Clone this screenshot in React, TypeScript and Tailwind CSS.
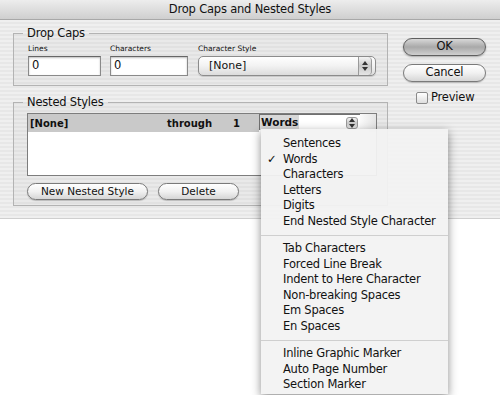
import React from "react";

const Stepper = ({ className = "" }: { className?: string }) => (
  <div className={"flex flex-col items-center justify-center gap-[2px] bg-gradient-to-b from-[#f4f4f4] via-[#c9c9c9] to-[#e6e6e6] border-l border-[#9a9a9a] " + className}>
    <svg width="6" height="4" viewBox="0 0 6 4"><path d="M3 0 L6 4 L0 4 Z" fill="#333" /></svg>
    <svg width="6" height="4" viewBox="0 0 6 4"><path d="M0 0 L6 0 L3 4 Z" fill="#333" /></svg>
  </div>
);

const MenuItem = ({ label, checked = false }: { label: string; checked?: boolean }) => (
  <div className="h-[15.6px] flex items-center text-[11.5px] tracking-[-0.25px] leading-none text-[#111]">
    <span className="w-[22px] pl-[6px]">{checked ? "✓" : ""}</span>
    <span>{label}</span>
  </div>
);

const Sep = () => (
  <div className="h-[11.4px] flex items-center">
    <div className="h-px w-full bg-[#cfcfcf]" />
  </div>
);

export default function App() {
  return (
    <div className="relative w-[500px] h-[395px] bg-white overflow-hidden font-['DejaVu_Sans',sans-serif] text-[#111]">
      {/* Title bar */}
      <div className="h-[20px] flex items-center justify-center bg-gradient-to-b from-[#ededed] to-[#cfcfcf] border-b border-[#a8a8a8] text-[11.5px] tracking-[-0.2px] leading-none">
        Drop Caps and Nested Styles
      </div>

      {/* Dialog body */}
      <div className="h-[199px] flex pl-[13px] pt-[5px] bg-[repeating-linear-gradient(180deg,#efefef_0px,#efefef_2px,#e7e7e7_2px,#e7e7e7_4px)] border-b border-[#cfcfcf]">
        <div className="w-[375px] flex flex-col gap-[8px]">
          {/* Drop Caps */}
          <fieldset className="border border-[#b3b3b3] pl-[14px] pt-[3px] pb-[9px] bg-black/[0.025]">
            <legend className="ml-[-5px] px-[4px] text-[11.5px] tracking-[-0.2px] leading-[16px]">Drop Caps</legend>
            <div className="flex gap-[9px]">
              <div className="flex flex-col gap-[2px]">
                <span className="text-[7.5px] leading-[10px]">Lines</span>
                <div className="w-[73px] h-[20px] bg-white border border-[#8a8a8a] border-t-[#666] shadow-[inset_0_1px_2px_rgba(0,0,0,0.25)] flex items-center pl-[3px] text-[11.5px]">0</div>
              </div>
              <div className="flex flex-col gap-[2px]">
                <span className="text-[7.5px] leading-[10px]">Characters</span>
                <div className="w-[78px] h-[20px] bg-white border border-[#8a8a8a] border-t-[#666] shadow-[inset_0_1px_2px_rgba(0,0,0,0.25)] flex items-center pl-[3px] text-[11.5px]">0</div>
              </div>
              <div className="flex flex-col gap-[2px] ml-[1px]">
                <span className="text-[7.5px] leading-[10px]">Character Style</span>
                <div className="w-[178px] h-[20px] rounded-[5px] border border-[#8c8c8c] bg-gradient-to-b from-[#ffffff] via-[#f2f2f2] to-[#dcdcdc] flex items-center overflow-hidden shadow-[0_1px_1px_rgba(0,0,0,0.15)]">
                  <span className="flex-1 pl-[10px] text-[11px]">[None]</span>
                  <Stepper className="w-[14px] h-full rounded-r-[4px] mr-[3px] border-r" />
                </div>
              </div>
            </div>
          </fieldset>

          {/* Nested Styles */}
          <fieldset className="border border-[#b3b3b3] pl-[13px] pt-[3px] pb-[5px] bg-black/[0.025]">
            <legend className="ml-[-4px] px-[4px] text-[11.5px] tracking-[-0.2px] leading-[16px]">Nested Styles</legend>
            <div className="w-[350px] h-[63px] bg-white border border-[#7d7d7d] flex flex-col">
              <div className="h-[18px] flex items-center text-[10px] font-bold">
                <div className="w-[231px] h-full bg-[#c9c9c9] flex items-center pl-[2px]">
                  <span className="w-[137px]">[None]</span>
                  <span className="w-[66px]">through</span>
                  <span>1</span>
                </div>
                <div className="w-[101px] h-[16px] self-start bg-white border-l border-t border-[#6f6f6f] flex items-center">
                  <span className="h-full bg-[#d8d8d8] flex items-center px-[1px] text-[10.5px]">Words</span>
                  <div className="flex-1" />
                  <Stepper className="w-[12px] h-[12px] mr-[2px] rounded-[3px] border border-[#999]" />
                </div>
                <div className="flex-1 h-full bg-gradient-to-r from-[#fafafa] to-[#e4e4e4]" />
              </div>
            </div>
            <div className="flex gap-[10px] mt-[7px] text-[10.5px]">
              <div className="w-[121px] h-[17px] rounded-full border border-[#7a7a7a] bg-gradient-to-b from-[#ffffff] via-[#f1f1f1] to-[#d6d6d6] flex items-center justify-center leading-none shadow-[0_1px_1px_rgba(0,0,0,0.2)]">New Nested Style</div>
              <div className="w-[81px] h-[17px] rounded-full border border-[#7a7a7a] bg-gradient-to-b from-[#ffffff] via-[#f1f1f1] to-[#d6d6d6] flex items-center justify-center leading-none shadow-[0_1px_1px_rgba(0,0,0,0.2)]">Delete</div>
            </div>
          </fieldset>
        </div>

        {/* Right column */}
        <div className="ml-[15px] pt-[13px] flex flex-col text-[11.5px] tracking-[-0.2px]">
          <div className="w-[83px] h-[18px] rounded-full border border-[#5f5f5f] bg-gradient-to-b from-[#d8d8d8] via-[#a9a9a9] to-[#cfcfcf] flex items-center justify-center leading-none shadow-[0_1px_2px_rgba(0,0,0,0.3)]">OK</div>
          <div className="w-[83px] h-[18px] mt-[8px] rounded-full border border-[#7a7a7a] bg-gradient-to-b from-[#ffffff] via-[#f1f1f1] to-[#d6d6d6] flex items-center justify-center leading-none shadow-[0_1px_1px_rgba(0,0,0,0.2)]">Cancel</div>
          <div className="flex items-center mt-[10px] ml-[13px] gap-[3px]">
            <div className="w-[12px] h-[12px] rounded-[2px] border border-[#8a8a8a] bg-gradient-to-b from-[#ffffff] to-[#dedede]" />
            <span className="leading-none">Preview</span>
          </div>
        </div>
      </div>

      {/* Popup menu */}
      <div className="absolute left-[261px] top-[129px] w-[187px] pt-[7px] pb-[1px] bg-[#f2f2f2]/95 shadow-[0_3px_9px_rgba(0,0,0,0.45)]">
        <MenuItem label="Sentences" />
        <MenuItem label="Words" checked />
        <MenuItem label="Characters" />
        <MenuItem label="Letters" />
        <MenuItem label="Digits" />
        <MenuItem label="End Nested Style Character" />
        <Sep />
        <MenuItem label="Tab Characters" />
        <MenuItem label="Forced Line Break" />
        <MenuItem label="Indent to Here Character" />
        <MenuItem label="Non-breaking Spaces" />
        <MenuItem label="Em Spaces" />
        <MenuItem label="En Spaces" />
        <Sep />
        <MenuItem label="Inline Graphic Marker" />
        <MenuItem label="Auto Page Number" />
        <MenuItem label="Section Marker" />
      </div>
    </div>
  );
}
